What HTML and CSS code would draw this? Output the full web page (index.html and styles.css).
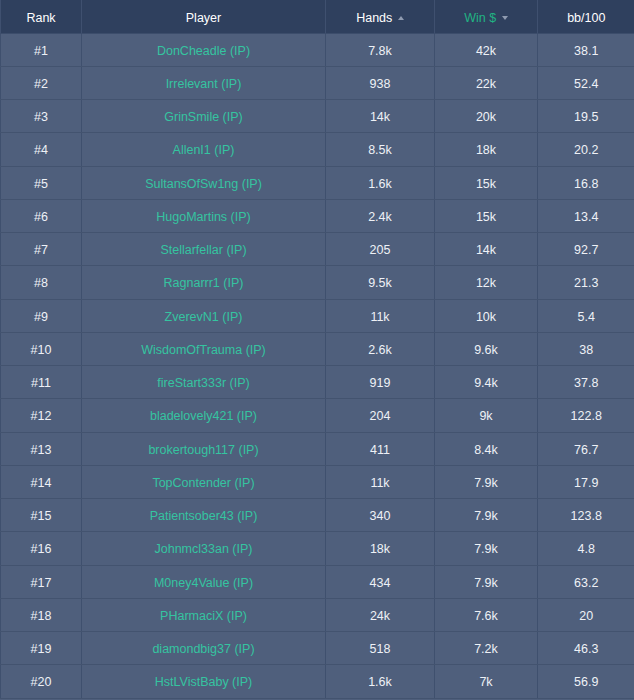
FILE: index.html
```html
<!DOCTYPE html>
<html>
<head>
<meta charset="utf-8">
<link rel="stylesheet" href="styles.css">
</head>
<body>
<table class="board">
  <colgroup>
    <col class="c-rank"><col class="c-player"><col class="c-hands"><col class="c-win"><col class="c-bb">
  </colgroup>
  <thead>
    <tr>
      <th>Rank</th>
      <th>Player</th>
      <th>Hands <span class="sort up"></span></th>
      <th class="active">Win $ <span class="sort down"></span></th>
      <th>bb/100</th>
    </tr>
  </thead>
  <tbody>
    <tr><td>#1</td><td class="name">DonCheadle (IP)</td><td>7.8k</td><td>42k</td><td>38.1</td></tr>
    <tr><td>#2</td><td class="name">Irrelevant (IP)</td><td>938</td><td>22k</td><td>52.4</td></tr>
    <tr><td>#3</td><td class="name">GrinSmile (IP)</td><td>14k</td><td>20k</td><td>19.5</td></tr>
    <tr><td>#4</td><td class="name">AllenI1 (IP)</td><td>8.5k</td><td>18k</td><td>20.2</td></tr>
    <tr><td>#5</td><td class="name">SultansOfSw1ng (IP)</td><td>1.6k</td><td>15k</td><td>16.8</td></tr>
    <tr><td>#6</td><td class="name">HugoMartins (IP)</td><td>2.4k</td><td>15k</td><td>13.4</td></tr>
    <tr><td>#7</td><td class="name">Stellarfellar (IP)</td><td>205</td><td>14k</td><td>92.7</td></tr>
    <tr><td>#8</td><td class="name">Ragnarrr1 (IP)</td><td>9.5k</td><td>12k</td><td>21.3</td></tr>
    <tr><td>#9</td><td class="name">ZverevN1 (IP)</td><td>11k</td><td>10k</td><td>5.4</td></tr>
    <tr><td>#10</td><td class="name">WisdomOfTrauma (IP)</td><td>2.6k</td><td>9.6k</td><td>38</td></tr>
    <tr><td>#11</td><td class="name">fireStart333r (IP)</td><td>919</td><td>9.4k</td><td>37.8</td></tr>
    <tr><td>#12</td><td class="name">bladelovely421 (IP)</td><td>204</td><td>9k</td><td>122.8</td></tr>
    <tr><td>#13</td><td class="name">brokertough117 (IP)</td><td>411</td><td>8.4k</td><td>76.7</td></tr>
    <tr><td>#14</td><td class="name">TopContender (IP)</td><td>11k</td><td>7.9k</td><td>17.9</td></tr>
    <tr><td>#15</td><td class="name">Patientsober43 (IP)</td><td>340</td><td>7.9k</td><td>123.8</td></tr>
    <tr><td>#16</td><td class="name">Johnmcl33an (IP)</td><td>18k</td><td>7.9k</td><td>4.8</td></tr>
    <tr><td>#17</td><td class="name">M0ney4Value (IP)</td><td>434</td><td>7.9k</td><td>63.2</td></tr>
    <tr><td>#18</td><td class="name">PHarmaciX (IP)</td><td>24k</td><td>7.6k</td><td>20</td></tr>
    <tr><td>#19</td><td class="name">diamondbig37 (IP)</td><td>518</td><td>7.2k</td><td>46.3</td></tr>
    <tr><td>#20</td><td class="name">HstLVistBaby (IP)</td><td>1.6k</td><td>7k</td><td>56.9</td></tr>
  </tbody>
</table>
</body>
</html>
```

FILE: styles.css
```css
html, body {
  margin: 0;
  padding: 0;
  background: #4f5f7c;
}
body {
  font-family: "Liberation Sans", Arial, sans-serif;
  font-size: 12.5px;
  color: #eef1f6;
}
.board {
  width: 634px;
  border-collapse: collapse;
  table-layout: fixed;
  border-left: 1px solid #2a3a57;
}
.c-rank { width: 81px; }
.c-player { width: 244px; }
.c-hands { width: 109px; }
.c-win { width: 103px; }
.c-bb { width: 97px; }
th {
  background: #2f405e;
  color: #ffffff;
  font-weight: normal;
  height: 33px;
  padding: 3px 0 0;
  text-align: center;
  border-left: 1px solid #3f506f;
  border-bottom: 1px solid #3c4d6b;
  box-sizing: border-box;
}
th.active {
  color: #21b383;
}
td {
  background: #4f5f7c;
  text-align: center;
  padding: 2px 0 0;
  height: 33.25px;
  box-sizing: border-box;
  border-left: 1px solid #3f506e;
  border-bottom: 1px solid #43536f;
  color: #eef1f6;
}
td.name {
  color: #35c4a0;
}
.sort {
  display: inline-block;
  width: 0;
  height: 0;
  margin-left: 2px;
  vertical-align: middle;
  border-left: 3.5px solid transparent;
  border-right: 3.5px solid transparent;
}
.sort.up {
  border-bottom: 4px solid #8f9bb0;
}
.sort.down {
  border-top: 4px solid #8f9bb0;
}
```
